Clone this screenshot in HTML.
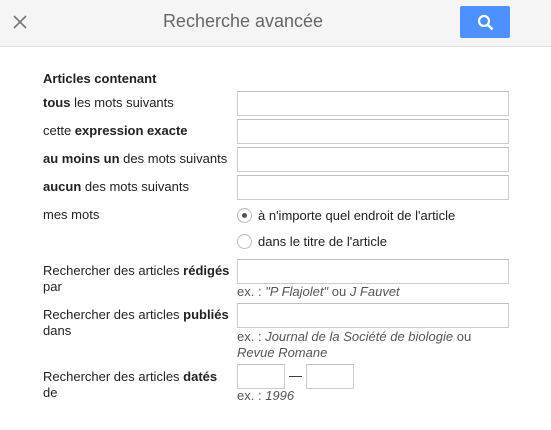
<!DOCTYPE html>
<html><head><meta charset="utf-8"><style>
body{margin:0;width:551px;height:430px;background:#fff;font-family:"Liberation Sans",Arial,sans-serif;font-size:13px;color:#222;position:relative;overflow:hidden}
.hd{position:absolute;left:0;top:0;width:551px;height:46px;background:#f5f5f5;border-bottom:1px solid #e0e0e0}
.t{position:absolute;left:0;width:486px;top:11px;text-align:center;font-size:18px;color:#666}
.btn{position:absolute;left:460px;top:6px;width:50px;height:32px;background:#4d90fe;border-radius:2px}
.a{position:absolute;white-space:nowrap;line-height:16px}
.in{position:absolute;border:1px solid #ccc;border-top-color:#c0c0c0;box-sizing:border-box;height:25px;background:#fff}
.r{position:absolute;width:15px;height:15px;border:1px solid #bbb;border-radius:50%;box-sizing:border-box;background:#fff}
b{font-weight:bold}
.ex{color:#555}
</style></head><body>
<div class="hd">
<svg style="position:absolute;left:13px;top:15px" width="14" height="14"><path d="M1 1L13 13M13 1L1 13" stroke="#777" stroke-width="1.6"/></svg>
<div class="t">Recherche avancée</div>
<div class="btn"><svg style="position:absolute;left:17px;top:8px" width="17" height="17"><circle cx="7" cy="7" r="5" fill="none" stroke="#fff" stroke-width="2.2"/><path d="M10.5 10.5L15.5 15.5" stroke="#fff" stroke-width="2.6"/></svg></div>
</div>
<div class="a" style="left:43px;top:71px"><b>Articles contenant</b></div>
<div class="a" style="left:43px;top:95px"><b>tous</b> les mots suivants</div>
<div class="in" style="left:237px;top:91px;width:272px"></div>
<div class="a" style="left:43px;top:123px">cette <b>expression exacte</b></div>
<div class="in" style="left:237px;top:119px;width:272px"></div>
<div class="a" style="left:43px;top:151px"><b>au moins un</b> des mots suivants</div>
<div class="in" style="left:237px;top:147px;width:272px"></div>
<div class="a" style="left:43px;top:179px"><b>aucun</b> des mots suivants</div>
<div class="in" style="left:237px;top:175px;width:272px"></div>
<div class="a" style="left:43px;top:207px">mes mots</div>
<div class="r" style="left:237px;top:208px"><div style="position:absolute;left:4px;top:4px;width:5px;height:5px;border-radius:50%;background:#555"></div></div>
<div class="a" style="left:258px;top:208px">à n'importe quel endroit de l'article</div>
<div class="r" style="left:237px;top:234px"></div>
<div class="a" style="left:258px;top:234px">dans le titre de l'article</div>
<div class="a" style="left:43px;top:263px">Rechercher des articles <b>rédigés</b><br>par</div>
<div class="in" style="left:237px;top:259px;width:272px"></div>
<div class="a ex" style="left:237px;top:284px">ex. : <i>"P Flajolet"</i> ou <i>J Fauvet</i></div>
<div class="a" style="left:43px;top:307px">Rechercher des articles <b>publiés</b><br>dans</div>
<div class="in" style="left:237px;top:303px;width:272px"></div>
<div class="a ex" style="left:237px;top:329px">ex. : <i>Journal de la Société de biologie</i> ou<br><i>Revue Romane</i></div>
<div class="a" style="left:43px;top:369px">Rechercher des articles <b>datés</b><br>de</div>
<div class="in" style="left:237px;top:364px;width:48px"></div>
<div class="a" style="left:289px;top:368px">—</div>
<div class="in" style="left:306px;top:364px;width:48px"></div>
<div class="a ex" style="left:237px;top:388px">ex. : <i>1996</i></div>
</body></html>
